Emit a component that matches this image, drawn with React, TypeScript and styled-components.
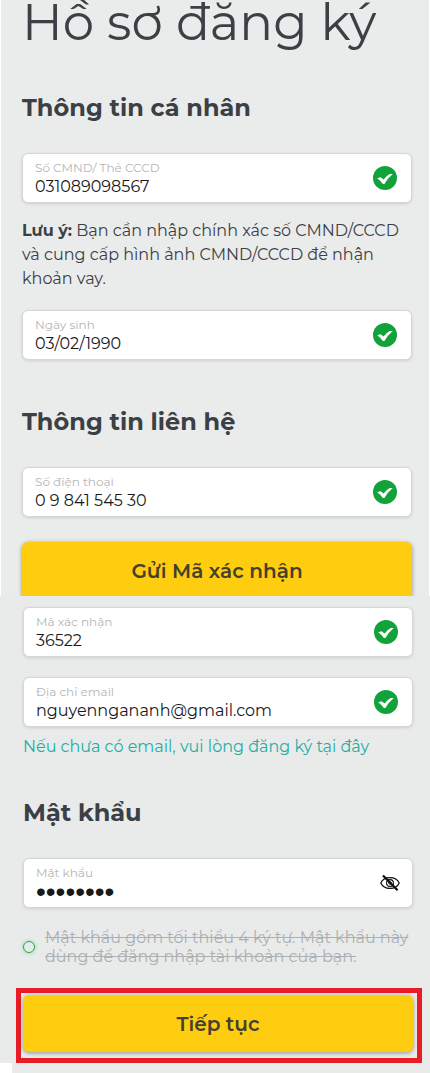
import React, { useState } from "react";
import styled, { createGlobalStyle } from "styled-components";

const GlobalStyle = createGlobalStyle`
  *, *::before, *::after { box-sizing: border-box; }
  body {
    margin: 0;
    background: #ffffff;
    color: #3b4045;
    font-family: Montserrat, Inter, "Noto Sans", sans-serif;
    font-size: 16px;
  }
`;

const Form = styled.form`
  display: flex;
  flex-direction: column;
`;

const ProfileSection = styled.section`
  margin: 0 1px;
  padding: 0 17px 0 21px;
  background: #eaebeb;
`;

const AccountSection = styled.section`
  padding: 11px 17px 0 23px;
  background: #e9ebeb;
`;

const FootStrip = styled.div`
  height: 10px;
  margin-left: 12px;
  background: #e9ebeb;
`;

const Title = styled.h1`
  margin: 0;
  font-size: 50px;
  font-weight: 400;
  line-height: 46px;
  white-space: nowrap;
`;

const Heading = styled.h2<{ $top: number }>`
  margin: ${(p) => p.$top}px 0 29px;
  font-size: 24px;
  font-weight: 700;
  line-height: 32px;
`;

const FieldBox = styled.div<{ $top?: number }>`
  display: flex;
  align-items: center;
  height: 50px;
  margin-top: ${(p) => p.$top ?? 0}px;
  padding: 0 14px 0 12px;
  background: #ffffff;
  border: 1px solid #d4d6d7;
  border-radius: 6px;
  box-shadow: 0 1px 3px rgba(0, 0, 0, 0.12);
`;

const FieldLabel = styled.label`
  display: flex;
  flex: 1;
  flex-direction: column;
  min-width: 0;
  padding-top: 2px;
`;

const Caption = styled.span`
  color: #b4b6b8;
  font-size: 12px;
  line-height: 16px;
`;

const FieldInput = styled.input`
  width: 100%;
  height: 22px;
  padding: 0;
  border: 0;
  outline: 0;
  background: transparent;
  color: #17191b;
  font: inherit;
  line-height: 22px;

  &[type="password"] {
    font-family: "Liberation Sans", sans-serif;
    font-size: 28px;
  }
`;

const Note = styled.p`
  margin: 16px 0 19px;
  line-height: 24px;
`;

const EmailLink = styled.a`
  display: block;
  margin-top: 8px;
  color: #1fada5;
  line-height: 24px;
  text-decoration: none;
`;

const YellowButton = styled.button`
  display: block;
  width: 100%;
  height: 57px;
  padding: 0;
  border: 0;
  border-radius: 6px;
  background: #ffcd10;
  box-shadow: 0 1px 4px rgba(0, 0, 0, 0.4);
  color: #45402c;
  font: inherit;
  font-size: 20px;
  font-weight: 600;
  cursor: pointer;
`;

const SendCode = styled.div`
  height: 58px;
  margin: 21px -4px 0;
  padding: 4px 4px 0;
  overflow: hidden;
`;

const Hint = styled.p`
  display: flex;
  align-items: center;
  gap: 10px;
  margin: 20px 0 22px;
  color: #adb0b2;
  line-height: 19px;
`;

const HintDot = styled.span`
  flex: none;
  width: 12px;
  height: 12px;
  border: 1px solid #26a447;
  border-radius: 50%;
  box-shadow: 0 0 4px #8fd3a0;
`;

const Highlight = styled.div`
  margin: 0 -9px 0 -7px;
  padding: 2px 4px 6px 2px;
  border: 5px solid #e81c25;
`;

const EyeButton = styled.button`
  display: flex;
  margin-right: -2px;
  padding: 0;
  border: 0;
  background: none;
  cursor: pointer;
`;

const CheckIcon = () => (
  <svg width="24" height="24" viewBox="0 0 24 24" aria-hidden="true">
    <circle cx="12" cy="12" r="12" fill="#11a23a" />
    <path
      d="M4.2 12.2 L7.6 11.2 L10.6 13.6 Q13.4 9.6 16.8 8 L19.8 8 Q14.8 12 11.4 18 L9.8 18 Q7.6 14.6 4.2 12.2Z"
      fill="#ffffff"
    />
  </svg>
);

const EyeOffIcon = () => (
  <svg width="20" height="18" viewBox="0 0 20 18" fill="none" stroke="#0b0b0b" aria-hidden="true">
    <path d="M0.8 9 C4 1.8 16 1.8 19.2 9 C16 16.2 4 16.2 0.8 9Z" strokeWidth="1.2" />
    <circle cx="10" cy="9" r="3.4" strokeWidth="1.1" />
    <circle cx="10" cy="9" r="1.2" strokeWidth="1" />
    <path d="M3 1.4 L17.6 16.2" strokeWidth="2.2" />
  </svg>
);

type FieldProps = {
  label: string;
  value: string;
  type?: string;
  top?: number;
  children?: React.ReactNode;
};

const Field = ({ label, value, type = "text", top, children }: FieldProps) => (
  <FieldBox $top={top}>
    <FieldLabel>
      <Caption>{label}</Caption>
      <FieldInput type={type} defaultValue={value} />
    </FieldLabel>
    {children ?? <CheckIcon />}
  </FieldBox>
);

export default function App() {
  const [visible, setVisible] = useState(false);

  return (
    <>
      <GlobalStyle />
      <Form onSubmit={(e) => e.preventDefault()}>
        <ProfileSection>
          <Title>Hồ sơ đăng ký</Title>
          <Heading $top={46}>Thông tin cá nhân</Heading>
          <Field label="Số CMND/ Thẻ CCCD" value="031089098567" />
          <Note>
            <strong>Lưu ý:</strong> Bạn cần nhập chính xác số CMND/CCCD và cung cấp hình ảnh
            CMND/CCCD để nhận khoản vay.
          </Note>
          <Field label="Ngày sinh" value="03/02/1990" />
          <Heading $top={46}>Thông tin liên hệ</Heading>
          <Field label="Số điện thoại" value="0 9 841 545 30" type="tel" />
          <SendCode>
            <YellowButton type="button">Gửi Mã xác nhận</YellowButton>
          </SendCode>
        </ProfileSection>
        <AccountSection>
          <Field label="Mã xác nhận" value="36522" />
          <Field label="Địa chỉ email" value="nguyenngananh@gmail.com" type="email" top={20} />
          <EmailLink href="#email">Nếu chưa có email, vui lòng đăng ký tại đây</EmailLink>
          <Heading $top={38}>Mật khẩu</Heading>
          <Field label="Mật khẩu" value="matkhau1" type={visible ? "text" : "password"}>
            <EyeButton type="button" aria-label="Hiện mật khẩu" onClick={() => setVisible(!visible)}>
              <EyeOffIcon />
            </EyeButton>
          </Field>
          <Hint>
            <HintDot />
            <s>Mật khẩu gồm tối thiểu 4 ký tự. Mật khẩu này dùng để đăng nhập tài khoản của bạn.</s>
          </Hint>
          <Highlight>
            <YellowButton type="submit">Tiếp tục</YellowButton>
          </Highlight>
        </AccountSection>
        <FootStrip />
      </Form>
    </>
  );
}
